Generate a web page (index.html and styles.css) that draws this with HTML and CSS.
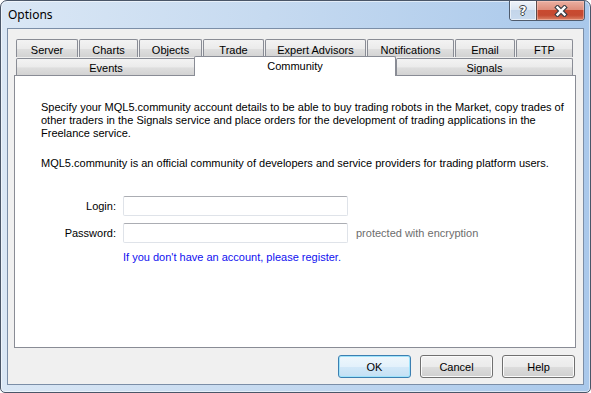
FILE: index.html
```html
<!DOCTYPE html>
<html>
<head>
<meta charset="utf-8">
<title>Options</title>
<link rel="stylesheet" href="styles.css">
</head>
<body>
<div class="window">
  <div class="titlebar">
    <span class="title">Options</span>
    <div class="caption-btns">
      <span class="cb help">?</span>
      <span class="cb close">
        <svg width="14" height="12" viewBox="0 0 14 12">
          <path d="M3.5 2.5 L10.5 9.5 M10.5 2.5 L3.5 9.5" stroke="#3b3f46" stroke-width="4.6" stroke-linecap="square" fill="none"/>
          <path d="M3.5 2.5 L10.5 9.5 M10.5 2.5 L3.5 9.5" stroke="#ffffff" stroke-width="2.4" stroke-linecap="square" fill="none"/>
        </svg>
      </span>
    </div>
  </div>
  <div class="client">
    <div class="tabctl">
      <div class="tabrow row1">
        <div class="tab w-server">Server</div>
        <div class="tab w-charts">Charts</div>
        <div class="tab w-objects">Objects</div>
        <div class="tab w-trade">Trade</div>
        <div class="tab w-ea">Expert Advisors</div>
        <div class="tab w-notif">Notifications</div>
        <div class="tab w-email">Email</div>
        <div class="tab w-ftp">FTP</div>
      </div>
      <div class="tabrow row2">
        <div class="tab w-events">Events</div>
        <div class="tab selected w-community">Community</div>
        <div class="tab w-signals">Signals</div>
      </div>
      <div class="panel">
        <p class="para">Specify your MQL5.community account details to be able to buy trading robots in the Market, copy trades of<br>other traders in the Signals service and place orders for the development of trading applications in the<br>Freelance service.</p>
        <p class="para para2">MQL5.community is an official community of developers and service providers for trading platform users.</p>
        <div class="form">
          <label class="lbl">Login:</label>
          <div class="input"></div>
          <span></span>
          <label class="lbl">Password:</label>
          <div class="input"></div>
          <span class="hint">protected with encryption</span>
          <span></span>
          <span class="link">If you don't have an account, please register.</span>
          <span></span>
        </div>
      </div>
    </div>
    <div class="btnrow">
      <div class="btn default">OK</div>
      <div class="btn">Cancel</div>
      <div class="btn">Help</div>
    </div>
  </div>
</div>
</body>
</html>
```
FILE: styles.css
```css
html, body {
  margin: 0;
  padding: 0;
}
body {
  font-family: "Liberation Sans", Arial, sans-serif;
  font-size: 11px;
  color: #000;
  background: #fff;
}
.window {
  width: 591px;
  height: 393px;
  box-sizing: border-box;
  border: 1px solid #4a5668;
  border-radius: 7px 7px 5px 5px;
  background: linear-gradient(to right, #dae7f5 0%, #c6daf0 45%, #a9c8eb 100%);
  display: flex;
  flex-direction: column;
  overflow: hidden;
  box-shadow: inset 0 0 0 1px rgba(255,255,255,0.55);
}
.titlebar {
  height: 27px;
  flex-shrink: 0;
  display: flex;
  justify-content: space-between;
  align-items: flex-start;
}
.title {
  font-family: "Noto Sans", "Open Sans", sans-serif;
  font-size: 12px;
  line-height: 28px;
  padding-left: 7px;
  color: #000;
}
.caption-btns {
  display: flex;
  height: 19px;
  margin-right: 5px;
  border: 1px solid #4f5b6d;
  border-top: none;
  border-radius: 0 0 4px 4px;
  overflow: hidden;
}
.cb {
  display: flex;
  align-items: center;
  justify-content: center;
  height: 19px;
}
.cb.help {
  width: 26px;
  background: linear-gradient(#eef3f9 0%, #dbe6f2 45%, #c3d5ea 50%, #c9daee 100%);
  font-family: "DejaVu Sans", sans-serif;
  font-weight: bold;
  font-size: 12px;
  color: #fff;
  text-shadow: 1px 0 0 #3b3f46, -1px 0 0 #3b3f46, 0 1px 0 #3b3f46, 0 -1px 0 #3b3f46;
  box-shadow: inset 0 0 0 1px rgba(255,255,255,0.6);
}
.cb.close {
  width: 47px;
  border-left: 1px solid #5a4b4b;
  background: linear-gradient(#eab0a2 0%, #de8e7c 45%, #c9492f 50%, #c54a31 75%, #db8266 100%);
  box-shadow: inset 0 0 0 1px rgba(255,210,200,0.45);
}
.client {
  flex: 1;
  margin: 0 6px 7px 6px;
  border: 1px solid #7b8ea7;
  background: #f0f0f0;
  padding: 10px 7px 6px 6px;
  display: flex;
  flex-direction: column;
}
.tabctl {
  display: flex;
  flex-direction: column;
}
.tabrow {
  display: flex;
  padding-left: 2px;
}
.row1 {
  height: 18px;
  gap: 1px;
  margin-bottom: 1px;
}
.row2 {
  height: 17px;
  align-items: flex-end;
}
.tab {
  box-sizing: border-box;
  height: 100%;
  border: 1px solid #898c95;
  border-bottom: none;
  border-radius: 2px 2px 0 0;
  background: linear-gradient(#f3f3f3 0%, #ebebeb 50%, #dedede 55%, #d3d3d3 100%);
  display: flex;
  align-items: center;
  justify-content: center;
  padding-top: 2px;
  white-space: nowrap;
}
.row2 .tab {
  height: 17px;
  padding-top: 1px;
}
.row2 .tab.selected {
  position: relative;
  z-index: 1;
  height: 20px;
  margin-top: -2px;
  margin-bottom: -1px;
  margin-left: -2px;
  background: #fff;
  padding-top: 0;
  padding-bottom: 2px;
}
.w-server { width: 62px; }
.w-charts { width: 59px; }
.w-objects { width: 63px; }
.w-trade { width: 61px; }
.w-ea { width: 101px; }
.w-notif { width: 87px; }
.w-email { width: 60px; }
.w-ftp { width: 57px; }
.w-events { width: 180px; }
.w-community { width: 202px; }
.w-signals { width: 177px; }
.panel {
  box-sizing: border-box;
  height: 273px;
  border: 1px solid #898c95;
  background: #fff;
  padding: 25px 0 0 26px;
}
.para {
  margin: 0;
  line-height: 13px;
  white-space: nowrap;
}
.para2 {
  margin-top: 17px;
}
.form {
  margin-top: 26px;
  display: grid;
  grid-template-columns: 75px 225px auto;
  column-gap: 7px;
  row-gap: 7px;
  align-items: center;
}
.lbl {
  text-align: right;
  line-height: 13px;
}
.input {
  box-sizing: border-box;
  height: 20px;
  background: #fff;
  border: 1px solid #dfe3e9;
  border-top-color: #abadb3;
  border-radius: 2px;
}
.hint {
  color: #6d6d6d;
  margin-left: 1px;
  line-height: 13px;
}
.link {
  color: #1010f0;
  line-height: 13px;
  margin-top: 1px;
  white-space: nowrap;
}
.btnrow {
  display: flex;
  justify-content: flex-end;
  gap: 9px;
  margin-top: 7px;
  padding-right: 1px;
}
.btn {
  box-sizing: border-box;
  width: 73px;
  height: 23px;
  border: 1px solid #707070;
  border-radius: 3px;
  background: linear-gradient(#f2f2f2 0%, #ebebeb 50%, #dddddd 51%, #cfcfcf 100%);
  box-shadow: inset 0 0 0 1px #fbfbfb;
  display: flex;
  align-items: center;
  justify-content: center;
}
.btn.default {
  border-color: #3c7fb1;
  box-shadow: inset 0 0 0 1px #9fe3fb;
  background: linear-gradient(#eef7fc 0%, #e3f1fb 50%, #d2e8f8 51%, #c4e0f4 100%);
}
```
